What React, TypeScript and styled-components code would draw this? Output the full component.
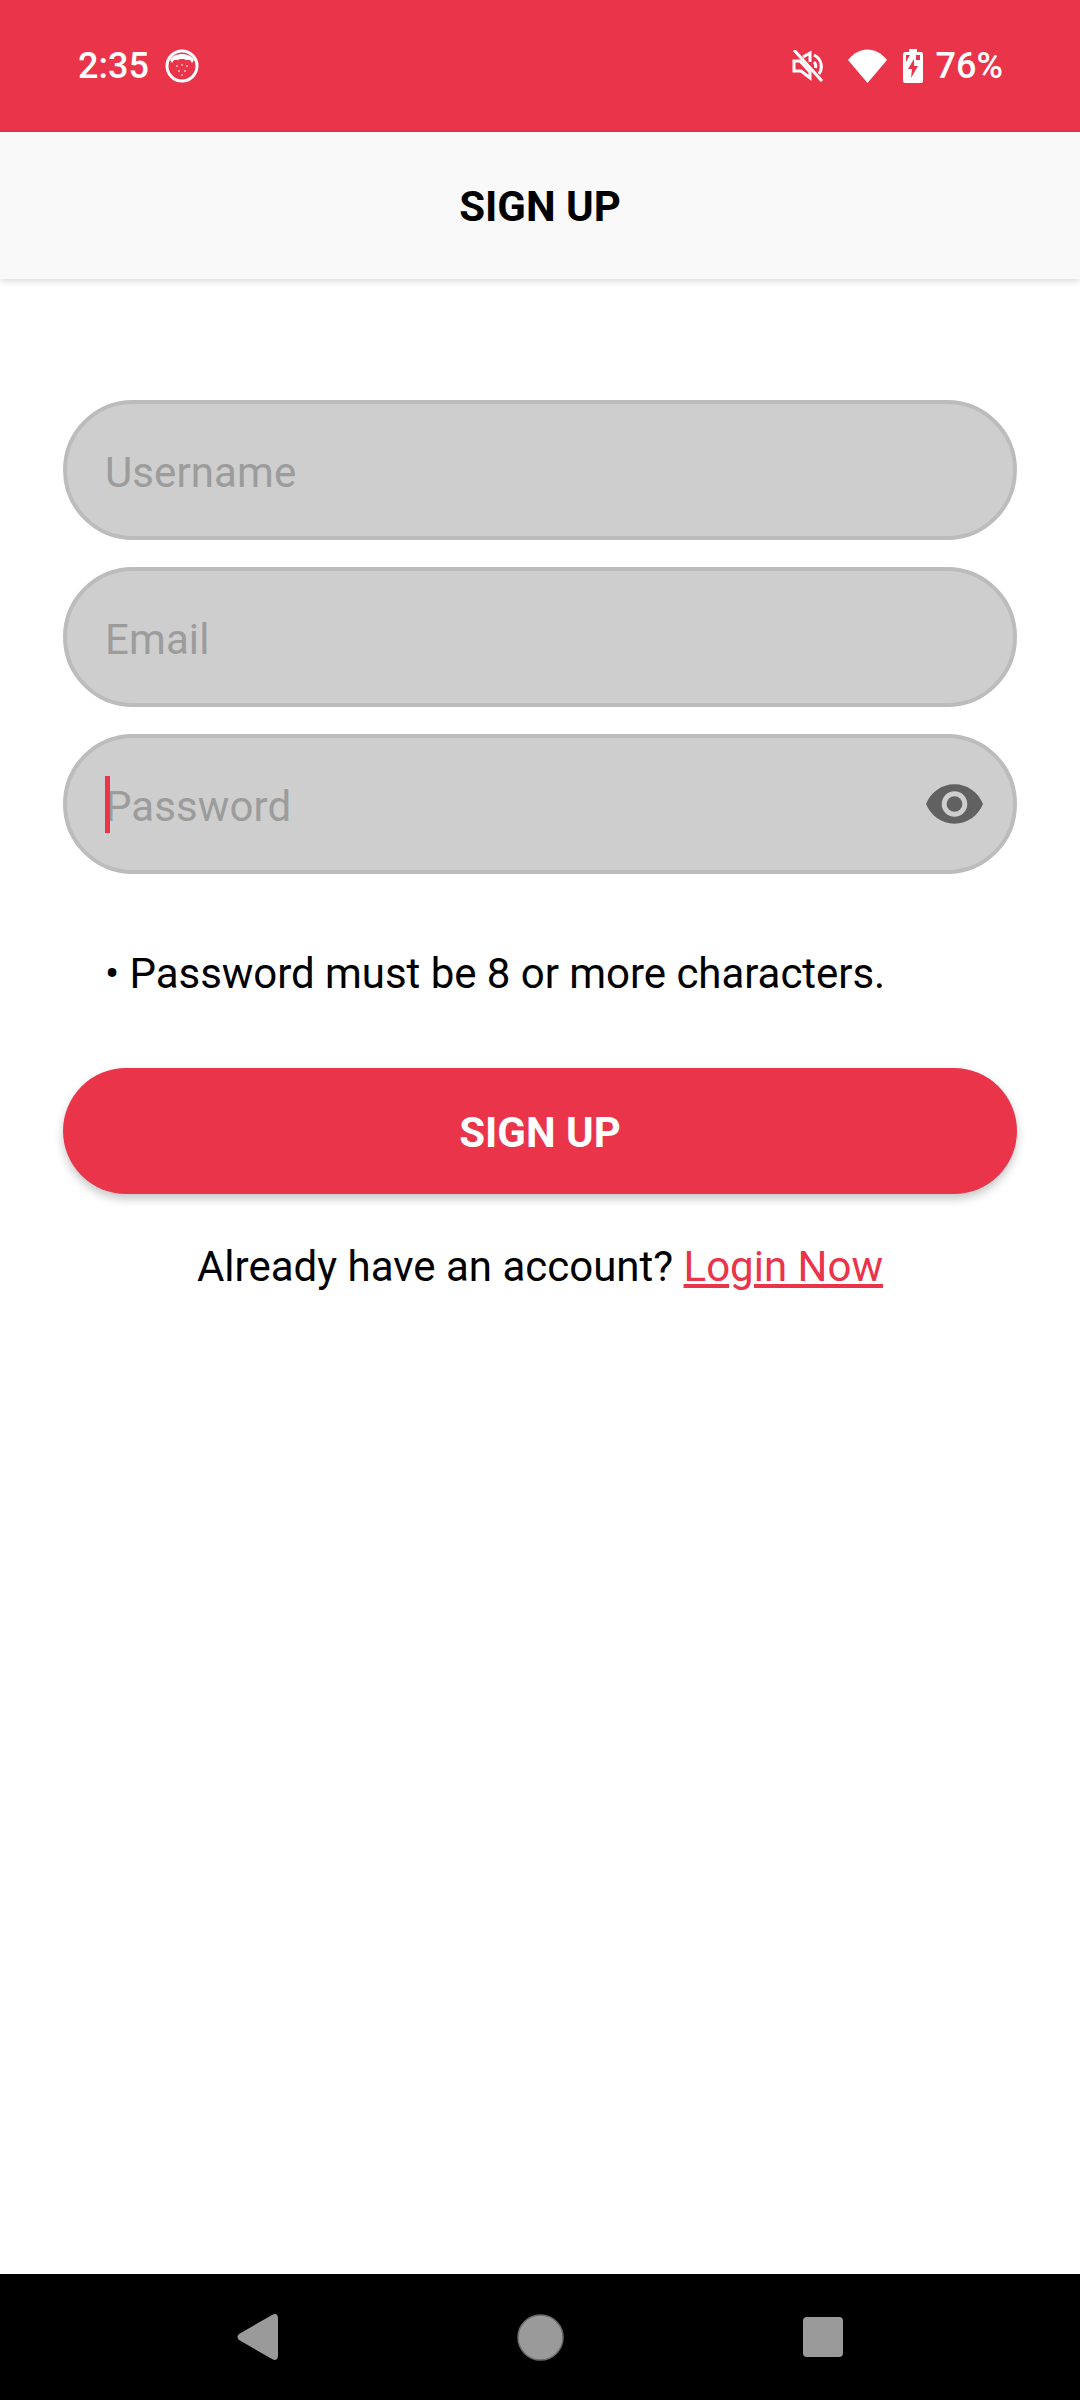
import styled, { createGlobalStyle } from 'styled-components';

const RED = '#ea344a';

const GlobalStyle = createGlobalStyle`
  html, body {
    margin: 0;
    padding: 0;
    background: #fff;
    font-family: Roboto, "Noto Sans", sans-serif;
  }
`;

const Screen = styled.div`
  width: 1080px;
  height: 2400px;
  display: flex;
  flex-direction: column;
  overflow: hidden;
`;

const StatusBar = styled.div`
  height: 132px;
  flex: none;
  box-sizing: border-box;
  padding: 0 77px 0 78px;
  background: ${RED};
  display: flex;
  justify-content: space-between;
  align-items: center;
  color: #fff;
  font-size: 36px;
  font-weight: 500;
`;

const StatusGroup = styled.div`
  display: flex;
  align-items: center;
`;

const StatusIcon = styled.span<{ $right: number }>`
  display: flex;
  margin-right: ${({ $right }) => $right}px;
`;

const AppBar = styled.header`
  height: 147px;
  flex: none;
  box-sizing: border-box;
  padding-top: 2px;
  background: #f9f9f9;
  display: flex;
  justify-content: center;
  align-items: center;
  color: #000;
  font-size: 42px;
  font-weight: 700;
  box-shadow: 0 2px 7px rgba(0, 0, 0, 0.16);
  position: relative;
`;

const Content = styled.main`
  flex: 1;
  box-sizing: border-box;
  padding: 121px 63px 0;
  display: flex;
  flex-direction: column;
`;

const Fields = styled.div`
  display: flex;
  flex-direction: column;
  gap: 27px;
`;

const Field = styled.div`
  height: 140px;
  box-sizing: border-box;
  border: 4px solid #bcbcbc;
  border-radius: 70px;
  background: #cecece;
  padding: 0 30px 0 38px;
  display: flex;
  align-items: center;
  justify-content: space-between;
`;

const Placeholder = styled.span`
  color: #9c9c9c;
  font-size: 42px;
  line-height: 56px;
  padding-top: 6px;
  letter-spacing: 0.1px;
`;

const CaretWrap = styled.div`
  position: relative;
  display: flex;
`;

const Caret = styled.span`
  position: absolute;
  left: 0;
  top: 3px;
  width: 5px;
  height: 57px;
  background: ${RED};
`;

const Hint = styled.p`
  margin: 72px 0 0 42px;
  color: #000;
  font-size: 42px;
  line-height: 56px;
  letter-spacing: -0.04px;
`;

const Submit = styled.button`
  margin-top: 66px;
  height: 126px;
  padding: 2px 0 0;
  border: none;
  border-radius: 63px;
  background: ${RED};
  color: #fff;
  font-family: inherit;
  font-size: 42px;
  font-weight: 700;
  box-shadow: 0 5px 10px rgba(0, 0, 0, 0.22);
`;

const LoginRow = styled.p`
  margin: 45px 0 0;
  text-align: center;
  color: #000;
  font-size: 42px;
  line-height: 56px;
`;

const LoginLink = styled.a`
  color: ${RED};
  text-decoration: underline;
`;

const NavBar = styled.nav`
  height: 126px;
  flex: none;
  background: #000;
  display: grid;
  grid-template-columns: repeat(3, 52px);
  justify-content: center;
  column-gap: 231px;
  align-items: center;
`;

const NavSlot = styled.div`
  display: flex;
  justify-content: center;
  align-items: center;
`;

const CatBadge = () => (
  <svg width="34" height="34" viewBox="0 0 34 34">
    <circle cx="17" cy="17" r="15" fill="none" stroke="#fff" strokeWidth="3" />
    <path d="M5 11 C9 3 25 3 29 11 L27 14 L25 11 H21 L19 10 H15 L13 11 H9 L7 14 Z" fill="#fff" />
    <g fill="#fff" opacity="0.7">
      <circle cx="12" cy="17" r="1" />
      <circle cx="17" cy="16" r="1" />
      <circle cx="22" cy="17" r="1" />
      <circle cx="14" cy="22" r="1" />
      <circle cx="20" cy="22" r="1" />
      <circle cx="17" cy="26" r="1" />
    </g>
  </svg>
);

const MuteIcon = () => (
  <svg width="32" height="32" viewBox="0 0 32 32" fill="none" stroke="#fff" strokeWidth="3">
    <path d="M2 0 L30 31" />
    <path d="M2 11 H8 L18 22 V28 L9 21 H2 Z" />
    <path d="M11 7 L18 3 V12" />
    <path d="M22 5 C30 9 31 18 27 24" />
    <path d="M22 12 C24 14 24 16 23.500 18" />
  </svg>
);

const WifiIcon = () => (
  <svg width="39" height="34" viewBox="0 0 39 34">
    <path d="M0 11 C11 -3 28 -3 39 11 L19.500 34 Z" fill="#fff" />
  </svg>
);

const BatteryIcon = () => (
  <svg width="20" height="34" viewBox="0 0 20 34">
    <path
      fillRule="evenodd"
      fill="#fff"
      d="M6 0 H14 V3 H18 Q20 3 20 5 V32 Q20 34 18 34 H2 Q0 34 0 32 V5 Q0 3 2 3 H6 Z M11 10 L5 20 H9 L8 29 L15 17 H11 Z M3 6 V13 L7 6 Z M17 6 H13 V11 H17 Z"
    />
  </svg>
);

const EyeIcon = () => (
  <svg width="57" height="40" viewBox="0 0 58 40">
    <path
      fillRule="evenodd"
      fill="#616161"
      d="M29 0 C42 0 53 8 58 20 C53 32 42 40 29 40 C16 40 5 32 0 20 C5 8 16 0 29 0 Z M29 7 A13 13 0 1 0 29 33 A13 13 0 1 0 29 7 Z"
    />
    <circle cx="29" cy="20" r="8" fill="#616161" />
  </svg>
);

const BackIcon = () => (
  <svg width="41" height="46" viewBox="0 0 41 46">
    <path d="M35 1 Q41 -2 41 5 V41 Q41 48 35 45 L2 26 Q-1 23 2 20 Z" fill="#9a9a9a" />
  </svg>
);

const HomeIcon = () => (
  <svg width="47" height="47" viewBox="0 0 47 47">
    <circle cx="23.500" cy="23.500" r="22.500" fill="#9a9a9a" stroke="#6b6b6b" strokeWidth="1.500" />
  </svg>
);

const RecentIcon = () => (
  <svg width="40" height="40" viewBox="0 0 40 40">
    <rect width="40" height="40" rx="4" fill="#9a9a9a" />
  </svg>
);

export default function App() {
  return (
    <>
      <GlobalStyle />
      <Screen>
        <StatusBar>
          <StatusGroup>
            <StatusIcon $right={16}>2:35</StatusIcon>
            <CatBadge />
          </StatusGroup>
          <StatusGroup>
            <StatusIcon $right={24}>
              <MuteIcon />
            </StatusIcon>
            <StatusIcon $right={16}>
              <WifiIcon />
            </StatusIcon>
            <StatusIcon $right={13}>
              <BatteryIcon />
            </StatusIcon>
            <span>76%</span>
          </StatusGroup>
        </StatusBar>
        <AppBar>SIGN UP</AppBar>
        <Content>
          <Fields>
            <Field>
              <Placeholder>Username</Placeholder>
            </Field>
            <Field>
              <Placeholder>Email</Placeholder>
            </Field>
            <Field>
              <CaretWrap>
                <Caret />
                <Placeholder>Password</Placeholder>
              </CaretWrap>
              <EyeIcon />
            </Field>
          </Fields>
          <Hint>• Password must be 8 or more characters.</Hint>
          <Submit>SIGN UP</Submit>
          <LoginRow>
            Already have an account? <LoginLink>Login Now</LoginLink>
          </LoginRow>
        </Content>
        <NavBar>
          <NavSlot>
            <BackIcon />
          </NavSlot>
          <NavSlot>
            <HomeIcon />
          </NavSlot>
          <NavSlot>
            <RecentIcon />
          </NavSlot>
        </NavBar>
      </Screen>
    </>
  );
}
